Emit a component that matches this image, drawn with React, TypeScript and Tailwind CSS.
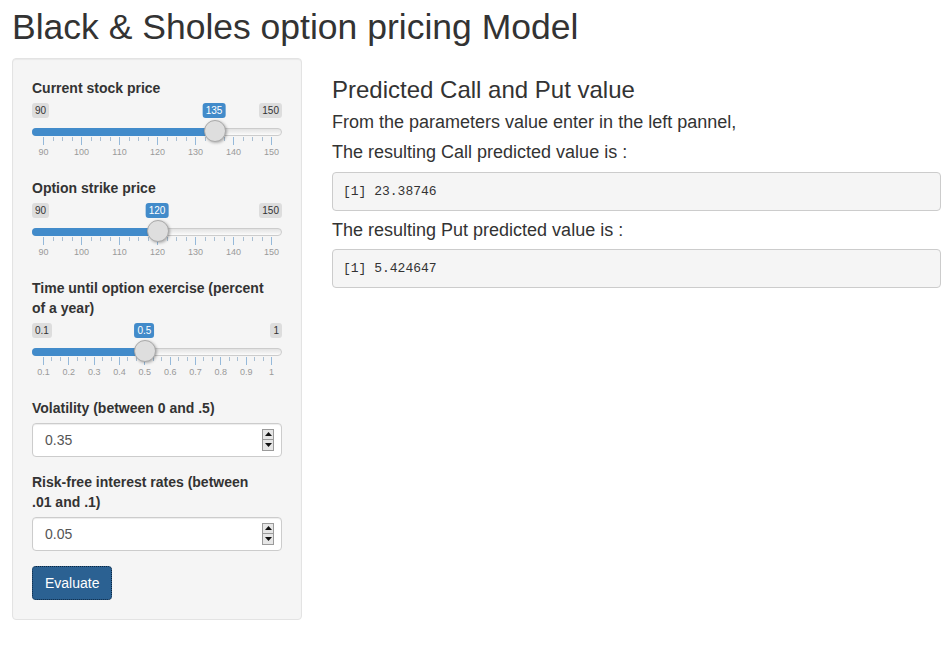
import React from 'react';

type SliderProps = {
    min: number;
    max: number;
    value: number;
    ticks: string[];
    minors: number;
    minLabel: string;
    maxLabel: string;
    valueLabel: string;
};

// ion.rangeSlider look (shiny skin); track is 250px wide, handle 22px
function Slider({ min, max, value, ticks, minors, minLabel, maxLabel, valueLabel }: SliderProps) {
    const pos = (p: number) => 11 + 228 * p;
    const x = pos((value - min) / (max - min));
    const steps = (ticks.length - 1) * (minors + 1);
    const marks = Array.from({ length: steps + 1 }, (_, i) => ({
        left: pos(i / steps),
        major: i % (minors + 1) === 0,
    }));

    return (
        <div className="relative h-[60px] w-full">
            <span className="absolute left-0 top-0 rounded-[3px] bg-[#dddddd] px-[3px] py-px text-[10px] leading-[13px] text-[#333]">
                {minLabel}
            </span>
            <span className="absolute right-0 top-0 rounded-[3px] bg-[#dddddd] px-[3px] py-px text-[10px] leading-[13px] text-[#333]">
                {maxLabel}
            </span>
            <span
                className="absolute top-0 -translate-x-1/2 rounded-[3px] bg-[#428bca] px-[3px] py-px text-[10px] leading-[13px] text-white"
                style={{ left: x }}
            >
                {valueLabel}
            </span>

            <div className="absolute left-0 right-0 top-[25px] h-2 rounded-full border border-[#cccccc] bg-linear-to-b from-[#e2e2e2] to-[#fbfbfb]" />
            <div className="absolute left-0 top-[25px] h-2 rounded-l-full bg-[#428bca]" style={{ width: x }} />

            {marks.map((m, i) => (
                <div
                    key={i}
                    className={`absolute top-[34px] w-px ${m.major ? 'h-2 bg-[#95b9da]' : 'h-1 bg-[#a9bfd3]'}`}
                    style={{ left: m.left }}
                />
            ))}
            {ticks.map((t, i) => (
                <span
                    key={t}
                    className="absolute top-[45px] -translate-x-1/2 text-[9px] leading-[9px] text-[#9a9a9a]"
                    style={{ left: pos(i / (ticks.length - 1)) + 0.5 }}
                >
                    {t}
                </span>
            ))}

            <div
                className="absolute top-[17px] h-[22px] w-[22px] -translate-x-1/2 rounded-full border border-[#aaaaaa] bg-[#dedede] shadow-[1px_1px_3px_rgba(0,0,0,0.3)]"
                style={{ left: x + 0.5 }}
            />
        </div>
    );
}

function NumberBox({ value }: { value: string }) {
    return (
        <div className="flex h-[34px] w-full items-center justify-between rounded border border-[#cccccc] bg-white pl-3 pr-[7px] text-[14px] text-[#555] shadow-[inset_0_1px_1px_rgba(0,0,0,0.075)]">
            <span>{value}</span>
            <div className="flex h-[22px] w-3 flex-col border border-[#9a9a9a] bg-[#e6e6e6]">
                <div className="flex flex-1 items-center justify-center border-b border-[#9a9a9a]">
                    <svg width="7" height="4" viewBox="0 0 7 4">
                        <path d="M0 4 L3.5 0 L7 4 Z" fill="#111" />
                    </svg>
                </div>
                <div className="flex flex-1 items-center justify-center">
                    <svg width="7" height="4" viewBox="0 0 7 4">
                        <path d="M0 0 L3.5 4 L7 0 Z" fill="#111" />
                    </svg>
                </div>
            </div>
        </div>
    );
}

const numTicks = ['90', '100', '110', '120', '130', '140', '150'];
const timeTicks = ['0.1', '0.2', '0.3', '0.4', '0.5', '0.6', '0.7', '0.8', '0.9', '1'];

export default function App() {
    return (
        <div className="min-h-[651px] bg-white pl-3 pr-1 pt-2 font-['Liberation_Sans',Arial,sans-serif] text-[14px] leading-[20px] text-[#333]">
            <h1 className="mb-[10px] text-[35.5px] font-normal leading-[39.6px]">Black &amp; Sholes option pricing Model</h1>

            <div className="flex items-start">
                {/* left pannel */}
                <div className="w-[290px] shrink-0 rounded border border-[#e3e3e3] bg-[#f5f5f5] p-[19px] shadow-[inset_0_1px_1px_rgba(0,0,0,0.05)]">
                    <div className="mb-[15px]">
                        <label className="mb-[5px] block font-bold">Current stock price</label>
                        <Slider min={90} max={150} value={135} ticks={numTicks} minors={3} minLabel="90" maxLabel="150" valueLabel="135" />
                    </div>
                    <div className="mb-[15px]">
                        <label className="mb-[5px] block font-bold">Option strike price</label>
                        <Slider min={90} max={150} value={120} ticks={numTicks} minors={3} minLabel="90" maxLabel="150" valueLabel="120" />
                    </div>
                    <div className="mb-[15px]">
                        <label className="mb-[5px] block font-bold">
                            Time until option exercise (percent
                            <br />
                            of a year)
                        </label>
                        <Slider min={0.1} max={1} value={0.5} ticks={timeTicks} minors={2} minLabel="0.1" maxLabel="1" valueLabel="0.5" />
                    </div>
                    <div className="mb-[15px]">
                        <label className="mb-[5px] block font-bold">Volatility (between 0 and .5)</label>
                        <NumberBox value="0.35" />
                    </div>
                    <div className="mb-[15px]">
                        <label className="mb-[5px] block font-bold">
                            Risk-free interest rates (between
                            <br />
                            .01 and .1)
                        </label>
                        <NumberBox value="0.05" />
                    </div>
                    <button className="h-[34px] rounded border border-dotted border-[#0c2640] bg-[#2b6192] px-3 text-[14px] text-white">
                        Evaluate
                    </button>
                </div>

                {/* results */}
                <div className="ml-[30px] min-w-0 flex-1 pt-[19px]">
                    <h3 className="mb-[10px] text-[24px] font-normal leading-[26.4px]">Predicted Call and Put value</h3>
                    <h4 className="mb-[10px] text-[18px] font-normal leading-[19.8px]">From the parameters value enter in the left pannel,</h4>
                    <h4 className="mb-[9px] text-[18px] font-normal leading-[19.8px]">The resulting Call predicted value is :</h4>
                    <pre className="mb-[10px] rounded border border-[#cccccc] bg-[#f5f5f5] px-[10px] py-[9px] font-['Liberation_Mono','Courier_New',monospace] text-[13px] leading-[19px] text-[#333]">
                        [1] 23.38746
                    </pre>
                    <h4 className="mb-[9px] text-[18px] font-normal leading-[19.8px]">The resulting Put predicted value is :</h4>
                    <pre className="rounded border border-[#cccccc] bg-[#f5f5f5] px-[10px] py-[9px] font-['Liberation_Mono','Courier_New',monospace] text-[13px] leading-[19px] text-[#333]">
                        [1] 5.424647
                    </pre>
                </div>
            </div>
        </div>
    );
}
